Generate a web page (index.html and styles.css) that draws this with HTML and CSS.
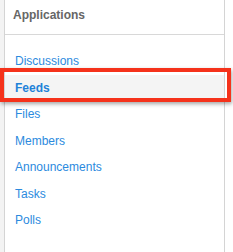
FILE: index.html
```html
<!DOCTYPE html>
<html>
<head>
<meta charset="utf-8">
<link rel="stylesheet" href="styles.css">
</head>
<body>
<div class="panel">
  <div class="panel-header">Applications</div>
  <ul class="app-list">
    <li><a class="app-link">Discussions</a></li>
    <li class="active"><a class="app-link">Feeds</a></li>
    <li><a class="app-link">Files</a></li>
    <li><a class="app-link">Members</a></li>
    <li><a class="app-link">Announcements</a></li>
    <li><a class="app-link">Tasks</a></li>
    <li><a class="app-link">Polls</a></li>
  </ul>
</div>
<div class="callout"></div>
</body>
</html>
```
FILE: styles.css
```css
html, body {
  margin: 0;
  padding: 0;
}
body {
  width: 233px;
  height: 252px;
  overflow: hidden;
  position: relative;
  background: linear-gradient(to right, #f3f3f3 0, #f3f3f3 4px, #ffffff 4px);
  font-family: "Liberation Sans", Arial, sans-serif;
}
.panel {
  margin-left: 4px;
  width: 219px;
  height: 252px;
  background: #ffffff;
  border-left: 1px solid #d4d4d4;
  border-right: 1px solid #d4d4d4;
}
.panel-header {
  font-size: 12px;
  font-weight: bold;
  color: #666666;
  line-height: 14px;
  padding: 8px 0 12px 8px;
  border-bottom: 1px solid #d8d8d8;
}
.app-list {
  list-style: none;
  margin: 0;
  padding: 13px 0 0 0;
  font-size: 12px;
}
.app-list li {
  line-height: 26.5px;
  padding-left: 10px;
}
.app-link {
  font-size: 12px;
  color: #2b8ade;
  text-decoration: none;
}
.app-list li.active {
  background: #f4f4f4;
}
.app-list li.active .app-link {
  font-weight: bold;
  color: #1f82d8;
}
.callout {
  position: absolute;
  left: 0;
  top: 68px;
  width: 223px;
  height: 26px;
  border: 4px solid #f5321b;
  box-shadow: 1px 2px 4px rgba(0,0,0,0.35);
}
```
